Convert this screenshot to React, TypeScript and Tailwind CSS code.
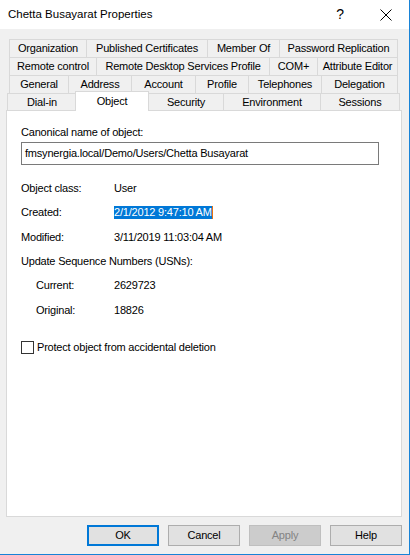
import React from "react";

type Tab = { label: string; w: string };

const rows: Tab[][] = [
  [
    { label: "Organization", w: "w-[77px]" },
    { label: "Published Certificates", w: "w-[121px]" },
    { label: "Member Of", w: "w-[72px]" },
    { label: "Password Replication", w: "w-[119px]" },
  ],
  [
    { label: "Remote control", w: "w-[87px]" },
    { label: "Remote Desktop Services Profile", w: "w-[173px]" },
    { label: "COM+", w: "w-[48px]" },
    { label: "Attribute Editor", w: "w-[81px]" },
  ],
  [
    { label: "General", w: "w-[59px]" },
    { label: "Address", w: "w-[63px]" },
    { label: "Account", w: "w-[64px]" },
    { label: "Profile", w: "w-[53px]" },
    { label: "Telephones", w: "w-[73px]" },
    { label: "Delegation", w: "w-[77px]" },
  ],
];

function TabRow({ tabs }: { tabs: Tab[] }) {
  return (
    <div className="flex h-[18px] ml-[9px]">
      {tabs.map((t, i) => (
        <div
          key={t.label}
          className={`${t.w} h-full flex items-center justify-center border-t border-l border-[#d9d9d9] ${
            i === tabs.length - 1 ? "border-r" : ""
          }`}
        >
          {t.label}
        </div>
      ))}
    </div>
  );
}

function Field({ label, value, indent, h }: { label: string; value: React.ReactNode; indent?: boolean; h: string }) {
  return (
    <div className={`flex items-center ${h}`}>
      <div className={indent ? "w-[93px] pl-[15px]" : "w-[93px]"}>{label}</div>
      <div>{value}</div>
    </div>
  );
}

export default function App() {
  return (
    <div className="w-[410px] h-[555px] bg-[#f0f0f0] border-r border-b border-[#1883d7] text-black text-[11px] tracking-[-0.2px] font-['Liberation_Sans',Arial,sans-serif] overflow-hidden">
      {/* Title bar */}
      <div className="h-[29px] bg-white flex items-center">
        <div className="pl-[8px] text-[11.5px] tracking-normal">Chetta Busayarat Properties</div>
        <div className="ml-auto w-[14px] text-[14px] text-center mr-[33px]">?</div>
        <svg width="12" height="12" viewBox="0 0 12 12" className="mr-[17px]">
          <path d="M0.5 0.5 L11.5 11.5 M11.5 0.5 L0.5 11.5" stroke="#000" strokeWidth="1" />
        </svg>
      </div>

      {/* Tabs */}
      <div className="pt-[10px]">
        {rows.map((r, i) => (
          <TabRow key={i} tabs={r} />
        ))}
        <div className="flex items-end h-[17px] ml-[7px]">
          <div className="w-[69px] h-full flex items-center justify-center border-t border-l border-[#d9d9d9]">Dial-in</div>
          <div className="w-[74px] -mx-px h-[20px] -mb-px relative z-10 bg-white flex items-center justify-center border-t border-l border-r border-[#d9d9d9] pb-[1px]">
            Object
          </div>
          <div className="w-[75px] h-full flex items-center justify-center border-t border-l border-[#d9d9d9]">Security</div>
          <div className="w-[97px] h-full flex items-center justify-center border-t border-l border-[#d9d9d9]">Environment</div>
          <div className="w-[80px] h-full flex items-center justify-center border-t border-l border-r border-[#d9d9d9]">Sessions</div>
        </div>

        {/* Panel */}
        <div className="ml-[6px] w-[396px] h-[407px] border border-[#d9d9d9] bg-white pt-[13px] pl-[14px]">
          <div className="h-[16px] flex items-center">Canonical name of object:</div>
          <div className="mt-[2px] w-[358px] h-[23px] border border-[#7a7a7a] flex items-center pl-[3px]">
            fmsynergia.local/Demo/Users/Chetta Busayarat
          </div>

          <div className="mt-[11px]">
            <Field h="h-[24px]" label="Object class:" value="User" />
            <Field
              h="h-[25px]"
              label="Created:"
              value={
                <span className="inline-flex items-center h-[13px] bg-[#0078d7] text-white border-r border-[#e8730f]">
                  2/1/2012 9:47:10 AM
                </span>
              }
            />
            <Field h="h-[24px]" label="Modified:" value="3/11/2019 11:03:04 AM" />
            <div className="h-[24px] flex items-center">Update Sequence Numbers (USNs):</div>
            <Field h="h-[25px]" indent label="Current:" value="2629723" />
            <Field h="h-[24px]" indent label="Original:" value="18826" />
          </div>

          <div className="mt-[17px] h-[16px] flex items-center gap-[3px]">
            <div className="w-[13px] h-[13px] border border-[#333333] bg-white" />
            <div>Protect object from accidental deletion</div>
          </div>
        </div>

        {/* Buttons */}
        <div className="mt-[8px] flex justify-end gap-[9px] pr-[7px]">
          <div className="w-[72px] h-[21px] border-2 border-[#0078d7] bg-[#e1e1e1] flex items-center justify-center">OK</div>
          <div className="w-[72px] h-[21px] border border-[#adadad] bg-[#e1e1e1] flex items-center justify-center">Cancel</div>
          <div className="w-[72px] h-[21px] border border-[#bfbfbf] bg-[#cccccc] text-[#838383] flex items-center justify-center">Apply</div>
          <div className="w-[72px] h-[21px] border border-[#adadad] bg-[#e1e1e1] flex items-center justify-center">Help</div>
        </div>
      </div>
    </div>
  );
}
